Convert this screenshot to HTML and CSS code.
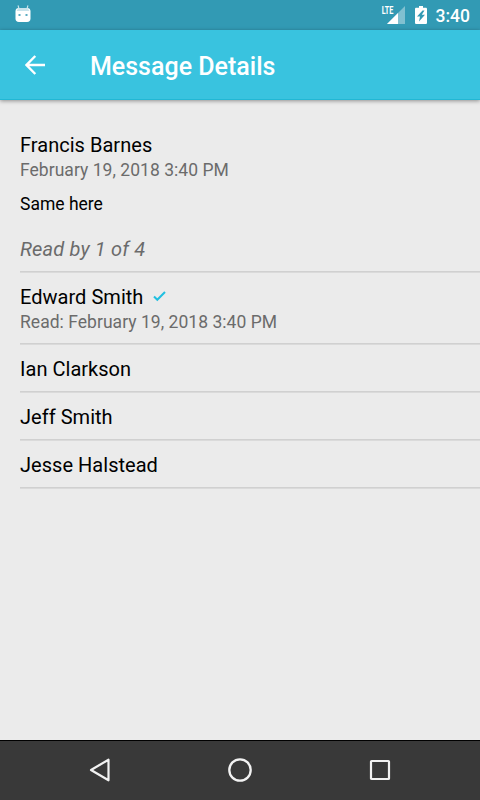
FILE: index.html
```html
<!DOCTYPE html>
<html lang="en">
<head>
<meta charset="utf-8">
<title>Message Details</title>
<link rel="stylesheet" href="styles.css">
</head>
<body>
<div class="screen">
  <div class="status-bar">
    <svg class="robot" width="16" height="18" viewBox="0 0 16 18">
      <path d="M4 4L3.200 .8M12 4l.8-3.200" stroke="#c9e3eb" stroke-width="1.200" stroke-linecap="round"/>
      <rect x=".5" y="3" width="15" height="14" rx="3.400" fill="#fff"/>
      <path d="M3.500 3h9l2 3h-13z" fill="#c9e3eb"/>
      <path d="M3.500 9h2v2h-2zM10.500 9h2v2h-2z" fill="#5bacc2"/>
    </svg>
    <div class="status-icons">
      <div class="signal">
        <svg width="18" height="18" viewBox="0 0 18 18">
          <path d="M18 0v18H0z" fill="#fff" fill-opacity=".38"/>
          <path d="M11 7v11H0z" fill="#fff"/>
        </svg>
        <span class="lte">LTE</span>
      </div>
      <svg class="battery" width="12" height="18" viewBox="0 0 12 18">
        <path fill="#fff" fill-rule="evenodd" d="M4 0h4v1.800h2.700c.7 0 1.300.5 1.300 1.200v13.700c0 .7-.6 1.300-1.300 1.300H1.300C.6 18 0 17.400 0 16.700V3c0-.7.6-1.200 1.300-1.200H4zM7.500 4.500L2 10.500h3L4 15.500 10 8.800H6.800L9.500 4.500z"/>
      </svg>
      <span class="clock">3:40</span>
    </div>
  </div>
  <header class="toolbar">
    <svg class="back" width="20" height="20" viewBox="0 0 20 20">
      <path d="M20 10H2M10.300 1L1.500 10l8.800 9" fill="none" stroke="#fff" stroke-width="2.400"/>
    </svg>
    <h1 class="title">Message Details</h1>
  </header>
  <main class="content">
    <section class="message">
      <div class="name">Francis Barnes</div>
      <div class="date">February 19, 2018 3:40 PM</div>
      <p class="text">Same here</p>
      <div class="read-count">Read by 1 of 4</div>
    </section>
    <ul class="readers">
      <li class="reader reader-read">
        <div class="name"><span class="who">Edward Smith</span><svg class="check" width="13" height="11" viewBox="0 0 13 11"><path d="M1 5.500l3.300 3.300L12 1" fill="none" stroke="#20bfe0" stroke-width="2"/></svg></div>
        <div class="date">Read: February 19, 2018 3:40 PM</div>
      </li>
      <li class="reader"><div class="name">Ian Clarkson</div></li>
      <li class="reader"><div class="name">Jeff Smith</div></li>
      <li class="reader"><div class="name">Jesse Halstead</div></li>
    </ul>
  </main>
  <nav class="nav-bar">
    <svg width="22" height="26" viewBox="0 0 22 26"><path d="M20.500 2.700v20.600L3 13z" fill="none" stroke="#f2f2f2" stroke-width="2.200" stroke-linejoin="round"/></svg>
    <svg width="24" height="24" viewBox="0 0 24 24"><circle cx="12" cy="12" r="10.700" fill="none" stroke="#f2f2f2" stroke-width="2.300"/></svg>
    <svg width="22" height="22" viewBox="0 0 22 22"><rect x="2" y="2" width="18" height="18" rx=".6" fill="none" stroke="#f2f2f2" stroke-width="2.200"/></svg>
  </nav>
</div>
</body>
</html>
```
FILE: styles.css
```css
* {
  box-sizing: border-box;
}

body {
  margin: 0;
  font-family: Roboto, "Liberation Sans", sans-serif;
  color: #000;
}

.screen {
  display: flex;
  flex-direction: column;
  width: 480px;
  height: 800px;
  overflow: hidden;
  background: #ebebeb;
}

.status-bar {
  display: flex;
  flex: none;
  justify-content: space-between;
  height: 30px;
  padding: 5px 10px 0 14.500px;
  background: #329ab4;
  color: #fff;
}

.status-icons {
  display: flex;
  align-items: flex-start;
}

.signal {
  position: relative;
  width: 22px;
  height: 19px;
  padding: 1px 0 0 4px;
  margin-right: 10px;
}

.signal svg {
  display: block;
}

.lte {
  position: absolute;
  top: 1px;
  left: -2px;
  padding: 0 1px;
  background: #329ab4;
  font-size: 11px;
  font-weight: 700;
  line-height: 10px;
  transform: scaleX(.66);
  transform-origin: left;
}

.battery {
  margin: 1px 9px 0 0;
}

.clock {
  font-size: 17.500px;
  font-weight: 500;
  line-height: 22px;
}

.toolbar {
  display: flex;
  flex: none;
  align-items: center;
  height: 70px;
  padding: 1px 25px 0;
  border-bottom: 1px solid #22b7d4;
  background: #39c3df;
  box-shadow: 0 1px 4px rgba(0, 0, 0, .4);
  color: #fff;
}

.title {
  margin: 3px 0 0 45px;
  font-size: 25px;
  font-weight: 500;
  line-height: 30px;
}

.content {
  flex: 1;
  padding: 32px 0 0 20px;
}

.message {
  height: 140px;
  padding-top: 1px;
  border-bottom: 1px solid #d0d0d0;
  box-shadow: 0 1px #dadada;
}

.name {
  display: flex;
  align-items: center;
  font-size: 20px;
  line-height: 25px;
  letter-spacing: .03px;
}

.date {
  color: #6b6b6b;
  font-size: 17.500px;
  line-height: 25px;
  letter-spacing: .035px;
}

.text {
  margin: 9px 0 0;
  font-size: 17.500px;
  line-height: 24px;
}

.read-count {
  margin-top: 21px;
  color: #6b6b6b;
  font-size: 20px;
  font-style: italic;
  line-height: 25px;
  letter-spacing: .16px;
}

.readers {
  margin: 0;
  padding: 0;
  list-style: none;
}

.reader {
  height: 48px;
  padding-top: 13px;
  border-bottom: 1px solid #d0d0d0;
  box-shadow: 0 1px #dadada;
}

.reader-read {
  height: 72px;
}

.check {
  margin: -2px 0 0 10px;
}

.nav-bar {
  display: flex;
  flex: none;
  align-items: center;
  justify-content: space-between;
  height: 60px;
  padding: 0 89px 2px 88px;
  border-top: 1px solid #000;
  background: #393939;
}
```
